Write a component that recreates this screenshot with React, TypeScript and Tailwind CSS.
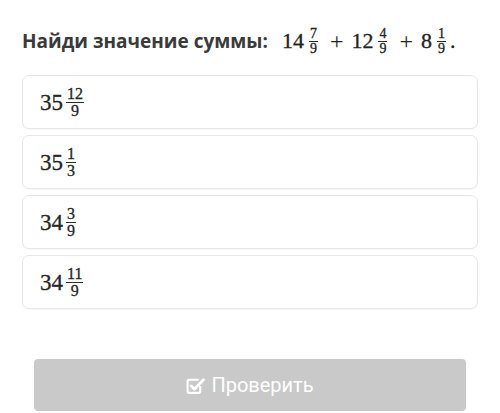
import React from "react";

function Frac({ n, d, size, gap }: { n: string; d: string; size: string; gap: string }) {
  return (
    <span className={`inline-flex flex-col items-center ${gap} ${size}`}>
      <span className="px-[1px]">{n}</span>
      <span className="h-px w-full bg-[#2b2b2b]" />
      <span className="px-[1px]">{d}</span>
    </span>
  );
}

function Mixed({ whole, n, d }: { whole: string; n: string; d: string }) {
  return (
    <span className="inline-flex items-center font-['Liberation_Serif',serif] text-[#262626] [-webkit-text-stroke:0.3px_#262626]">
      <span className="text-[23px] leading-none">{whole}</span>
      <Frac n={n} d={d} gap="ml-[3px]" size="text-[16px] leading-[16px]" />
    </span>
  );
}

const answers = [
  { whole: "35", n: "12", d: "9" },
  { whole: "35", n: "1", d: "3" },
  { whole: "34", n: "3", d: "9" },
  { whole: "34", n: "11", d: "9" },
];

export default function App() {
  return (
    <div className="w-[500px] h-[413px] bg-white px-[22px] pt-[26px] font-['Open_Sans',sans-serif]">
      <div className="flex items-center h-[30px]">
        <h1 className="text-[19px] font-bold text-[#3a3a3a]">Найди значение суммы:</h1>
        <span className="ml-[14px] inline-flex items-center font-['Liberation_Serif',serif] text-[22px] text-[#222] [-webkit-text-stroke:0.3px_#222]">
          <span className="leading-none">14</span>
          <Frac n="7" d="9" gap="ml-[5px]" size="text-[14px] leading-[14px]" />
          <span className="ml-[12px] mr-[8px] leading-none text-[24px] [-webkit-text-stroke:0]">+</span>
          <span className="leading-none">12</span>
          <Frac n="4" d="9" gap="ml-[5px]" size="text-[14px] leading-[14px]" />
          <span className="ml-[12px] mr-[8px] leading-none text-[24px] [-webkit-text-stroke:0]">+</span>
          <span className="leading-none">8</span>
          <Frac n="1" d="9" gap="ml-[5px]" size="text-[14px] leading-[14px]" />
          <span className="ml-[4px] leading-none">.</span>
        </span>
      </div>

      <div className="mt-[19px] flex flex-col gap-[6px]">
        {answers.map((a, i) => (
          <div
            key={i}
            className="h-[54px] flex items-center rounded-[7px] border border-[#e6e8e8] bg-white px-[17px] shadow-[0_1px_1px_rgba(0,0,0,0.03)]"
          >
            <Mixed whole={a.whole} n={a.n} d={a.d} />
          </div>
        ))}
      </div>

      <div className="mx-[12px] mt-[50px]">
        <button className="w-full h-[52px] rounded-[4px] bg-[#c9c9c9] text-white flex items-center justify-center gap-[6px] font-['Roboto',sans-serif] text-[20px]">
          <svg width="19" height="19" viewBox="0 0 18 18" fill="none">
            <path d="M13.5 9.5v5a1.5 1.5 0 0 1-1.5 1.5H3A1.5 1.5 0 0 1 1.5 14.5V5A1.5 1.5 0 0 1 3 3.5h9" stroke="white" strokeWidth="2" />
            <path d="M5 9.5l3 3L16.5 3.5" stroke="white" strokeWidth="2.6" strokeLinecap="round" strokeLinejoin="round" />
          </svg>
          Проверить
        </button>
      </div>
    </div>
  );
}
